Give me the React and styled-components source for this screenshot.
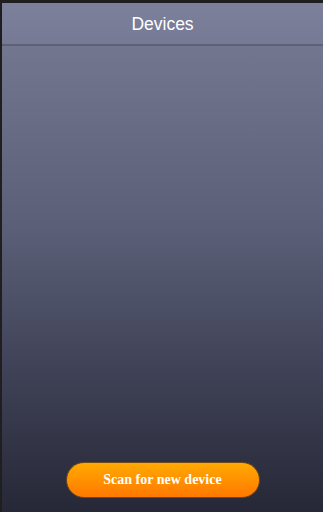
import React from 'react'
import styled, { createGlobalStyle } from 'styled-components'

const Global = createGlobalStyle`
html, body {
    margin: 0;
    padding: 0;
    background: #1f1f21;
}
`

function App() {
    return (
        <Frame>
            <Global />
            <Screen>
                <Header>Devices</Header>
                <Body>
                    <ScanButton>Scan for new device</ScanButton>
                </Body>
            </Screen>
        </Frame>
    )
}

const Frame = styled.div`
box-sizing: border-box;
height: 512px;
width: 323px;
padding: 3px 0 0 2px;
display: flex;
`

const Screen = styled.div`
flex: 1;
display: flex;
flex-direction: column;
`

const Header = styled.div`
height: 40px;
flex-shrink: 0;
display: flex;
align-items: center;
justify-content: center;
background: linear-gradient(#7c809a, #767a94);
border-bottom: 2px solid #5d6076;
box-shadow: 0 1px 2px rgba(0,0,0,0.15);
color: #fff;
font-family: "Liberation Sans", Arial, sans-serif;
font-size: 17.5px;
padding-top: 1px;
`

const Body = styled.div`
flex: 1;
display: flex;
flex-direction: column;
justify-content: flex-end;
align-items: center;
padding-bottom: 14px;
background: linear-gradient(#72768f 0%, #5a5e76 40%, #3f4256 70%, #262837 100%);
`

const ScanButton = styled.button`
width: 194px;
height: 36px;
border-radius: 18px;
border: 1px solid #6b4a1a;
background: linear-gradient(#ffaa00, #ff7800);
color: #fff;
font-family: "Liberation Serif", "Times New Roman", serif;
font-weight: bold;
font-size: 14px;
cursor: pointer;
`

export default App
